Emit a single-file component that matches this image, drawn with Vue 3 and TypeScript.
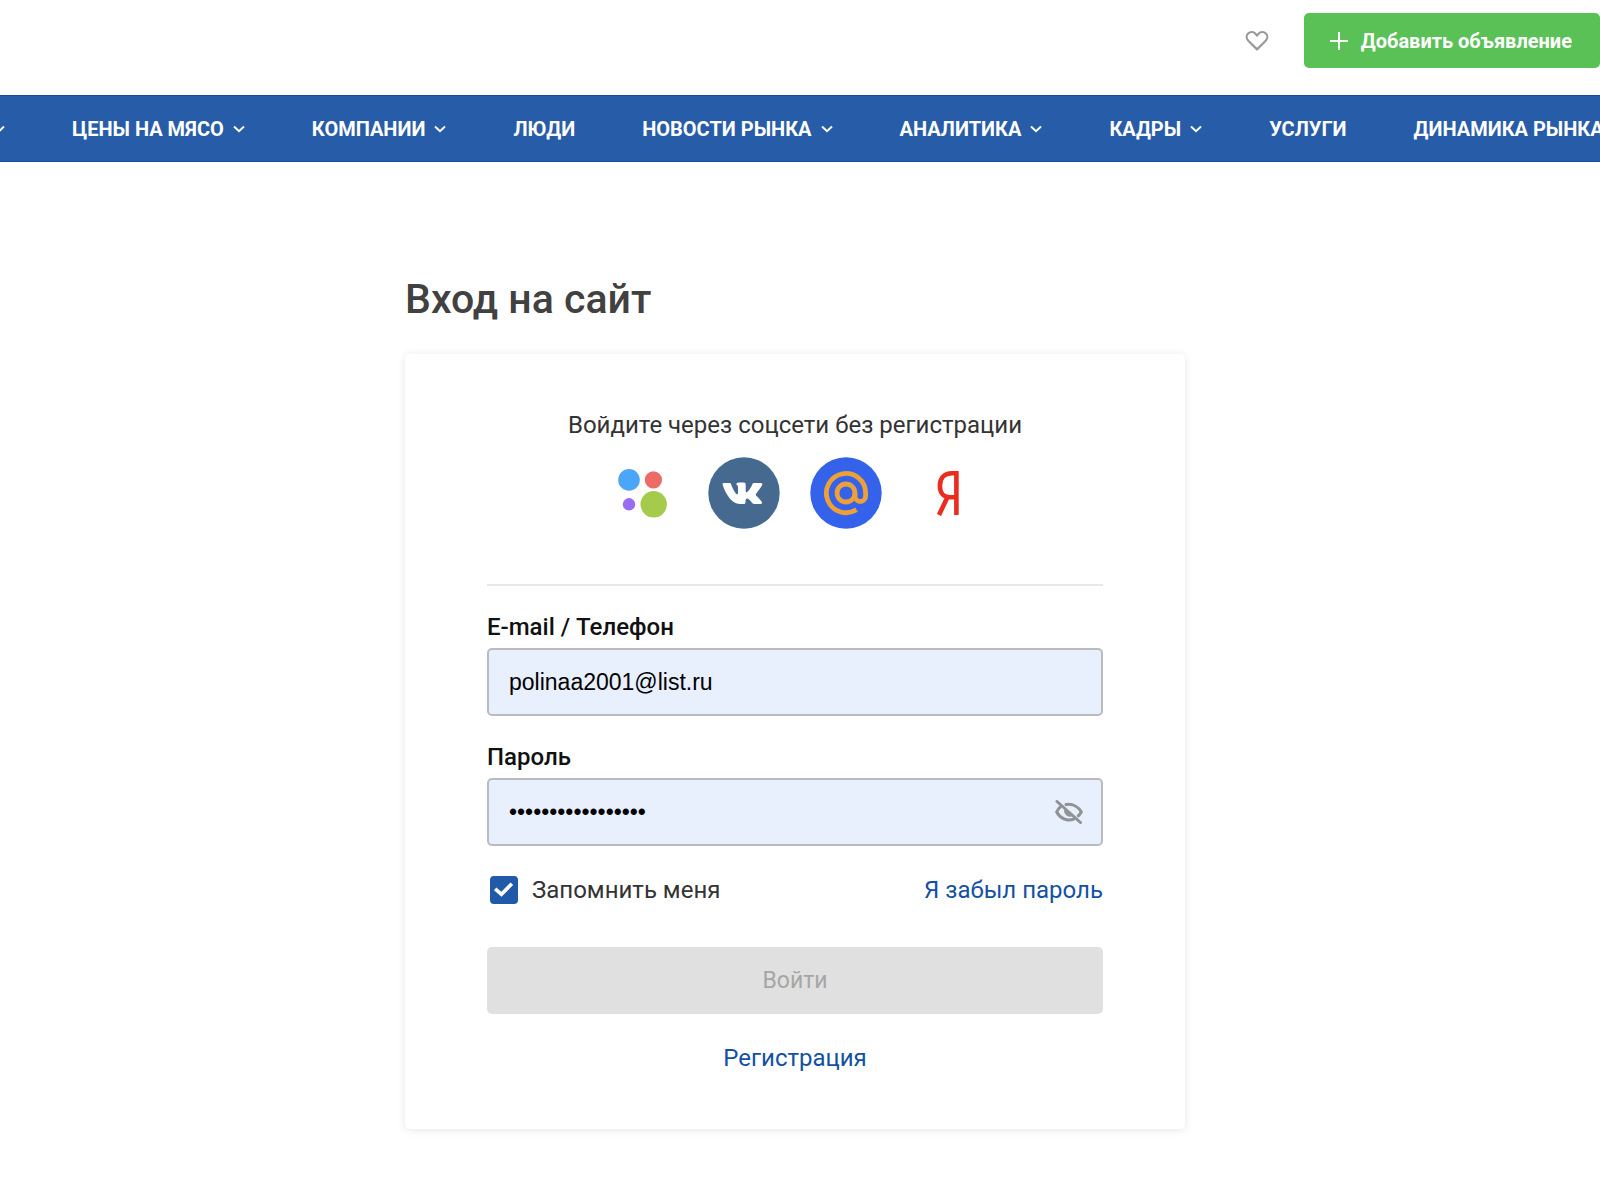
<script setup lang="ts">
import { ref } from 'vue'

interface NavItem {
  title: string
  hasMenu: boolean
}

const navItems: NavItem[] = [
  { title: 'ЦЕНЫ НА МЯСО', hasMenu: true },
  { title: 'КОМПАНИИ', hasMenu: true },
  { title: 'ЛЮДИ', hasMenu: false },
  { title: 'НОВОСТИ РЫНКА', hasMenu: true },
  { title: 'АНАЛИТИКА', hasMenu: true },
  { title: 'КАДРЫ', hasMenu: true },
  { title: 'УСЛУГИ', hasMenu: false },
  { title: 'ДИНАМИКА РЫНКА', hasMenu: false },
]

const login = ref('polinaa2001@list.ru')
const password = ref('12345678901234567')
const remember = ref(true)
const passwordVisible = ref(false)
</script>

<template>
  <div class="page">
    <header class="topbar">
      <a href="#" class="favorites">
        <svg width="24" height="22" viewBox="0 0 24 22" fill="none" stroke="#999" stroke-width="2.2" stroke-linejoin="round">
          <path d="M12 19.4 3.3 10.8C1.2 8.6 1.2 5.4 3.1 3.5 5.2 1.4 8.6 1.6 10.4 3.7L12 5.6l1.600-1.900C15.400 1.600 18.800 1.400 20.900 3.500c1.900 1.900 1.900 5.100-.2 7.300Z" />
        </svg>
      </a>
      <button type="button" class="add">
        <svg width="18" height="18" viewBox="0 0 18 18" stroke="#fff" stroke-width="2">
          <path d="M9 0v18M0 9h18" />
        </svg>
        Добавить объявление
      </button>
    </header>

    <nav class="nav">
      <ul>
        <li>
          <svg class="chevron" width="12" height="8" viewBox="0 0 12 8"><path d="M1 1.500 6 6.200l5-4.700" /></svg>
        </li>
        <li v-for="item in navItems" :key="item.title">
          <a href="#">{{ item.title }}</a>
          <svg v-if="item.hasMenu" class="chevron" width="12" height="8" viewBox="0 0 12 8"><path d="M1 1.500 6 6.200l5-4.700" /></svg>
        </li>
      </ul>
    </nav>

    <main class="main">
      <div class="column">
        <h1>Вход на сайт</h1>
        <form class="card" @submit.prevent>
          <p class="hint">Войдите через соцсети без регистрации</p>
          <div class="socials">
            <a href="#">
              <svg viewBox="0 0 72 72">
                <circle cx="23" cy="22.900" r="10.800" fill="#4ba5f8" />
                <circle cx="47.400" cy="22.900" r="8.600" fill="#ec6b67" />
                <circle cx="23" cy="47.300" r="6.200" fill="#9a6cef" />
                <circle cx="47.700" cy="47.300" r="13.200" fill="#a4cb4b" />
              </svg>
            </a>
            <a href="#">
              <svg viewBox="0 0 72 72">
                <circle cx="36" cy="36" r="35.700" fill="#46698f" />
                <path fill="#fff" d="M16 26h5.500c1 0 1.300.5 1.600 1.300 1.300 3.600 3.600 8.200 5.200 9.800.9.900 1.700.5 1.700-1.500v-4.300c0-2.600-.4-3.500-2.100-4.100.8-1.300 2.300-1.700 4.400-1.700h3.200c1.800 0 2.200.7 2.200 2.500v6c0 1.400.9 1.700 2 .6 1.700-1.700 3.600-4.900 4.700-7.400.3-.8.7-1.200 1.700-1.200h6.500c1.700 0 2 .8 1.500 2.100-.8 2.100-3.300 5.300-5.800 8.500-.8 1-.7 1.500.2 2.400 2.300 2.200 4.300 4.300 5.200 5.800.8 1.400.2 2.200-1.500 2.200h-5.600c-1.300 0-2-.6-3.200-2-1.400-1.600-2.700-3.100-4-3.400-1.400-.2-1.800.7-1.800 2.600 0 2-.6 2.800-2.500 2.800-6.400.3-10.700-2-14.100-6.600-2.700-3.700-5-8-6.300-12.300-.4-1.500 0-2.100 1.300-2.100Z" />
              </svg>
            </a>
            <a href="#">
              <svg viewBox="0 0 72 72">
                <circle cx="36" cy="36" r="35.700" fill="#3462ea" />
                <g fill="none" stroke="#eda037" stroke-width="4.800">
                  <circle cx="36" cy="36" r="9" />
                  <path d="M45 36v3a5.300 5.500 0 0 0 10.600 0v-3A19.600 19.600 0 1 0 46.500 52.600" />
                </g>
              </svg>
            </a>
            <a href="#">
              <svg viewBox="0 0 72 72" fill="none" stroke="#ea2d1e" stroke-width="4.600">
                <path d="M44.400 58V16.200h-4.500c-7.400 0-12 4.600-12 12.600s4.600 11.400 9.500 11.400h7M36 39 27 58" />
              </svg>
            </a>
          </div>
          <hr />

          <label class="label" for="login">E-mail / Телефон</label>
          <div class="field">
            <input id="login" v-model="login" type="text" autocomplete="username" />
          </div>

          <label class="label" for="password">Пароль</label>
          <div class="field">
            <input id="password" v-model="password" :type="passwordVisible ? 'text' : 'password'" autocomplete="current-password" />
            <button type="button" class="eye" @click="passwordVisible = !passwordVisible">
              <svg width="28" height="24" viewBox="0 0 28 24" fill="none" stroke="#8f9394" stroke-width="3" stroke-linecap="round">
                <path d="M11 4.600c7-1.200 12.500 2.600 15.300 7.400-.8 1.500-1.800 2.700-3 3.800M5.400 6.800C3.700 8.200 2.500 10 1.700 12c3.300 6.600 10.500 9.200 16.800 7.300" />
                <path d="M10 8.800c-1.700 4.600 2.200 8.500 6.400 7.200Z" fill="#8f9394" stroke-width="1" />
                <path d="m2 1.500 23.500 21" />
              </svg>
            </button>
          </div>

          <div class="options">
            <label class="remember">
              <input v-model="remember" type="checkbox" />
              <span>Запомнить меня</span>
            </label>
            <a href="#">Я забыл пароль</a>
          </div>

          <button type="submit" class="submit" disabled>Войти</button>
          <a href="#" class="register">Регистрация</a>
        </form>
      </div>
    </main>
  </div>
</template>

<style>
body {
  background: #fff;
}
</style>

<style scoped>
.page {
  font-family: Roboto, 'Liberation Sans', sans-serif;
  font-size: 24px;
  line-height: 32px;
  color: #333;
  overflow: hidden;
}

a {
  color: #1351a3;
  text-decoration: none;
}

button {
  font-family: inherit;
  border: 0;
  cursor: pointer;
}

.topbar {
  display: flex;
  justify-content: flex-end;
  align-items: center;
  gap: 35px;
  padding: 13px 0 27px;
}

.favorites {
  display: flex;
}

.add {
  display: flex;
  align-items: center;
  gap: 13px;
  height: 55px;
  padding: 0 28px 0 26px;
  border-radius: 5px;
  background: #5ac157;
  color: #fff;
  font-size: 20px;
  font-weight: 700;
}

.nav {
  background: #275ca8;
  border-top: 1px solid #134c99;
  border-bottom: 1px solid #134c99;
  overflow: hidden;
}

.nav ul {
  display: flex;
  gap: 67px;
  height: 65px;
  margin: 0 0 0 -7px;
  padding: 0;
  list-style: none;
}

.nav li {
  display: flex;
  flex: none;
  align-items: center;
  gap: 9px;
}

.nav a {
  color: #fff;
  font-size: 20px;
  font-weight: 700;
  white-space: nowrap;
}

.chevron {
  fill: none;
  stroke: #fff;
  stroke-width: 2;
}

.main {
  padding: 113px 10px 52px 0;
}

.column {
  max-width: 780px;
  margin: 0 auto;
}

h1 {
  margin: 0 0 31px;
  font-size: 41px;
  line-height: 48px;
  font-weight: 500;
  color: #414141;
}

.card {
  display: flex;
  flex-direction: column;
  padding: 55px 82px;
  border-radius: 5px;
  box-shadow: 0 1px 8px rgba(0, 0, 0, 0.1);
}

.hint {
  margin: 0 0 16px;
  text-align: center;
}

.socials {
  display: flex;
  justify-content: center;
  gap: 30px;
}

.socials a {
  display: block;
  width: 72px;
  height: 72px;
}

.socials svg {
  display: block;
  width: 100%;
  height: 100%;
}

hr {
  width: 100%;
  margin: 55px 0 25px;
  border: 0;
  border-top: 2px solid #e8e8e8;
}

.label {
  margin-bottom: 5px;
  font-weight: 500;
  color: #111;
}

.field {
  display: flex;
  align-items: center;
  height: 68px;
  margin-bottom: 25px;
  padding: 0 18px 0 20px;
  box-sizing: border-box;
  border: 2px solid #b9bbbe;
  border-radius: 5px;
  background: #e8effd;
}

.field input {
  flex: 1;
  min-width: 0;
  padding: 0;
  border: 0;
  outline: 0;
  background: none;
  color: #000;
  font-family: 'Liberation Sans', Arial, sans-serif;
  font-size: 23px;
}

.eye {
  display: flex;
  padding: 0;
  background: none;
}

.options {
  display: flex;
  justify-content: space-between;
  align-items: center;
  margin: 3px 0 41px;
}

.remember {
  display: flex;
  align-items: center;
  gap: 14px;
  cursor: pointer;
}

.remember input {
  appearance: none;
  width: 28px;
  height: 28px;
  margin: 0 0 0 3px;
  border-radius: 4px;
  border: 2px solid #215aa8;
  background: #fff;
}

.remember input:checked {
  background: #215aa8 url("data:image/svg+xml,%3Csvg xmlns='http://www.w3.org/2000/svg' viewBox='0 0 23 23'%3E%3Cpath d='M3 10.500 9 15.500 19 5.500' fill='none' stroke='white' stroke-width='3.500'/%3E%3C/svg%3E") center / contain no-repeat;
}

.submit {
  height: 67px;
  margin-bottom: 28px;
  border-radius: 5px;
  background: #e0e0e0;
  color: #a6a6a6;
  font-size: 23px;
}

.register {
  align-self: center;
}
</style>
